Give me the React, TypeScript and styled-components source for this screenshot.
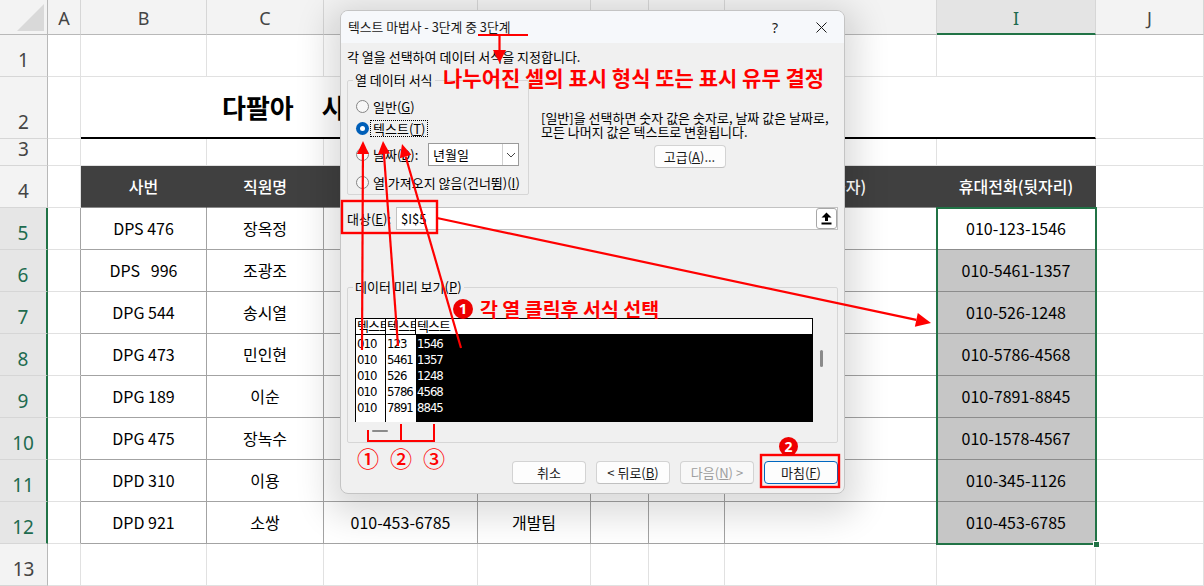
import React from "react";
import styled, { createGlobalStyle, css } from "styled-components";

const GlobalStyle = createGlobalStyle`
  html, body { margin: 0; padding: 0; background: #fff; }
  body { font-family: "Noto Sans CJK KR", "Noto Sans", sans-serif; overflow: hidden; }
  * { box-sizing: border-box; }
`;

const COLS = [48, 33, 126, 117, 154, 113, 58, 76, 212, 159, 108];
const ROWS = [35, 42, 62, 27, 42, 42, 42, 42, 42, 42, 42, 42, 42, 42];
const GREEN = "#217346";
const RED = "#ff0000";

const Page = styled.div`
  position: relative;
  width: 1204px;
  height: 586px;
  overflow: hidden;
  background: #fff;
`;

const Sheet = styled.div`
  display: grid;
  grid-template-columns: ${COLS.map((c) => c + "px").join(" ")};
  grid-template-rows: ${ROWS.map((r) => r + "px").join(" ")};
`;

const placed = css<{ $r: number; $c: number; $span?: number; $rs?: number }>`
  grid-row: ${(p) => p.$r} / span ${(p) => p.$rs ?? 1};
  grid-column: ${(p) => p.$c} / span ${(p) => p.$span ?? 1};
`;

const Corner = styled.div`
  grid-row: 1;
  grid-column: 1;
  position: relative;
  background: #f3f3f3;
  border-right: 1px solid #b8b8b8;
  border-bottom: 1px solid #b8b8b8;
  &::after {
    content: "";
    position: absolute;
    right: 3px;
    bottom: 3px;
    width: 27px;
    height: 27px;
    background: #d9d9d9;
    clip-path: polygon(100% 0, 100% 100%, 0 100%);
  }
`;

const ColHead = styled.div<{ $r: number; $c: number; $sel?: boolean }>`
  ${placed};
  display: flex;
  align-items: center;
  justify-content: center;
  font-family: "Noto Sans", sans-serif;
  font-size: 18px;
  line-height: 1;
  padding-top: 2px;
  color: ${(p) => (p.$sel ? "#1e6b4f" : "#444")};
  background: ${(p) => (p.$sel ? "#e4e4e4" : "#f3f3f3")};
  border-right: 1px solid #d6d6d6;
  border-bottom: ${(p) => (p.$sel ? `2px solid ${GREEN}` : "1px solid #b8b8b8")};
`;

const RowHead = styled.div<{ $r: number; $c: number; $sel?: boolean }>`
  ${placed};
  display: flex;
  align-items: flex-end;
  justify-content: center;
  padding-bottom: 4px;
  font-family: "Noto Sans", sans-serif;
  font-size: 19px;
  line-height: 24px;
  color: ${(p) => (p.$sel ? "#1e6b4f" : "#444")};
  background: ${(p) => (p.$sel ? "#e6e6e6" : "#f3f3f3")};
  border-right: ${(p) => (p.$sel ? `2px solid ${GREEN}` : "1px solid #b8b8b8")};
  border-bottom: 1px solid #d6d6d6;
`;

type Kind = "plain" | "table" | "head" | "sel" | "active" | "title";

const kindStyles: Record<Kind, ReturnType<typeof css>> = {
  plain: css`
    background: #fff;
    border-right: 1px solid #e1e1e1;
    border-bottom: 1px solid #e1e1e1;
  `,
  table: css`
    background: #fff;
    border-right: 1px solid #a3a3a3;
    border-bottom: 1px solid #a3a3a3;
  `,
  head: css`
    background: #404040;
    color: #fff;
    font-weight: 500;
    border-right: 1px solid #404040;
    border-bottom: 1px solid #8a8a8a;
  `,
  sel: css`
    background: #c6c6c6;
    border-right: 1px solid #8c8c8c;
    border-bottom: 1px solid #8c8c8c;
  `,
  active: css`
    background: #fff;
    border-right: 1px solid #8c8c8c;
    border-bottom: 1px solid #8c8c8c;
  `,
  title: css`
    background: #fff;
    border-right: 1px solid #e1e1e1;
    border-bottom: 2px solid #000;
    justify-content: flex-start;
    padding-left: 141px;
    font-size: 26px;
    font-weight: 700;
    word-spacing: 22px;
  `,
};

const Cell = styled.div<{ $r: number; $c: number; $span?: number; $kind: Kind; $darkRight?: boolean }>`
  ${placed};
  display: flex;
  align-items: center;
  justify-content: center;
  font-size: 16px;
  line-height: 1.2;
  color: #000;
  white-space: pre;
  overflow: hidden;
  ${(p) => kindStyles[p.$kind]};
  ${(p) => p.$darkRight && "border-right-color: #a3a3a3;"}
`;

const SelBox = styled.div<{ $r: number; $c: number; $rs?: number }>`
  ${placed};
  position: relative;
  z-index: 2;
  margin: -1px -1px -1px -1px;
  border: 2px solid ${GREEN};
  pointer-events: none;
`;

const FillHandle = styled.div`
  position: absolute;
  right: -5px;
  bottom: -5px;
  width: 7px;
  height: 7px;
  background: ${GREEN};
  border: 1px solid #fff;
`;

/* ---------------- Dialog ---------------- */

const Dialog = styled.div`
  position: absolute;
  left: 340px;
  top: 10px;
  width: 505px;
  height: 484px;
  z-index: 4;
  display: flex;
  flex-direction: column;
  background: #f0f0f0;
  border: 1px solid #c4c4c4;
  border-radius: 8px;
  overflow: hidden;
  box-shadow: 0 10px 34px 12px rgba(0, 0, 0, 0.14);
  font-family: "Noto Sans CJK KR", sans-serif;
  font-size: 13px;
  color: #000;
`;

const TitleBar = styled.div`
  flex: none;
  height: 32px;
  display: flex;
  align-items: center;
  padding-left: 7px;
  background: #f6f8fb;
`;

const TitleText = styled.span`
  font-size: 12.8px;
  line-height: 16px;
  color: #1a1a1a;
`;

const TitleButtons = styled.div`
  margin-left: auto;
  display: flex;
  height: 100%;
`;

const TitleBtn = styled.div`
  width: 46px;
  height: 100%;
  display: flex;
  align-items: center;
  justify-content: center;
  font-family: "Noto Sans", sans-serif;
  font-size: 14px;
  color: #1a1a1a;
`;

const Body = styled.div`
  flex: 1;
  display: flex;
  flex-direction: column;
  padding: 0 6px;
`;

const Instruction = styled.div`
  margin-top: 6px;
  line-height: 16px;
`;

const GroupRow = styled.div`
  display: flex;
  align-items: flex-start;
  margin-top: 8px;
`;

const Group = styled.fieldset<{ $w?: number; $h: number; $mt?: number }>`
  margin: ${(p) => p.$mt ?? 0}px 0 0 0;
  padding: 0 0 0 3px;
  width: ${(p) => (p.$w ? p.$w + "px" : "auto")};
  height: ${(p) => p.$h}px;
  border: 1px solid #d6d6d6;
  border-radius: 2px;
  display: flex;
  flex-direction: column;
  min-inline-size: 0;
`;

const Legend = styled.legend`
  padding: 0 2px;
  margin-left: 2px;
  font-size: 13px;
  line-height: 14px;
`;

const RadioRow = styled.div<{ $h: number; $mt: number }>`
  display: flex;
  align-items: center;
  height: ${(p) => p.$h}px;
  margin-top: ${(p) => p.$mt}px;
  padding-left: 5px;
  padding-right: 9px;
`;

const Radio = styled.span<{ $on?: boolean }>`
  position: relative;
  flex: none;
  width: 13px;
  height: 13px;
  border-radius: 50%;
  margin-right: 1px;
  ${(p) =>
    p.$on
      ? css`
          background: #005fb8;
          &::after {
            content: "";
            position: absolute;
            left: 4px;
            top: 4px;
            width: 5px;
            height: 5px;
            border-radius: 50%;
            background: #fff;
          }
        `
      : css`
          background: #f7f7f7;
          border: 1px solid #858585;
        `}
`;

const RadioLabel = styled.span<{ $focus?: boolean }>`
  padding: 0 2px;
  line-height: 15px;
  border: 1px ${(p) => (p.$focus ? "dotted #000" : "solid transparent")};
  white-space: nowrap;
`;

const Combo = styled.div`
  margin-left: auto;
  flex: none;
  width: 91px;
  height: 23px;
  display: flex;
  align-items: stretch;
  background: #fff;
  border: 1px solid #9a9a9a;
`;

const ComboText = styled.span`
  flex: 1;
  display: flex;
  align-items: center;
  padding-left: 4px;
`;

const ComboArrow = styled.span`
  width: 16px;
  display: flex;
  align-items: center;
  justify-content: center;
  border-left: 1px solid #d0d0d0;
`;

const SideCol = styled.div`
  flex: 1;
  margin-left: 12px;
  padding-top: 38px;
  display: flex;
  flex-direction: column;
  align-items: center;
`;

const Desc = styled.div`
  align-self: flex-start;
  line-height: 14px;
  white-space: nowrap;
`;

const Btn = styled.div<{ $w?: number; $default?: boolean; $disabled?: boolean; $mt?: number }>`
  flex: none;
  width: ${(p) => p.$w ?? 74}px;
  height: 23px;
  margin-top: ${(p) => p.$mt ?? 0}px;
  display: flex;
  align-items: center;
  justify-content: center;
  background: ${(p) => (p.$disabled ? "#f8f8f8" : "#fdfdfd")};
  border: 1px solid ${(p) => (p.$default ? "#0067c0" : "#d3d3d3")};
  border-bottom-color: ${(p) => (p.$default ? "#0067c0" : "#c0c0c0")};
  border-radius: 4px;
  color: ${(p) => (p.$disabled ? "#9d9d9d" : "#1a1a1a")};
  white-space: nowrap;
`;

const TargetRow = styled.div`
  display: flex;
  align-items: center;
  height: 23px;
  margin-top: 12px;
`;

const TargetInput = styled.div`
  margin-left: auto;
  width: 442px;
  height: 23px;
  display: flex;
  align-items: center;
  padding: 0 0 0 4px;
  background: #fff;
  border: 1px solid #c2c2c2;
`;

const CollapseBtn = styled.span`
  margin-left: auto;
  width: 21px;
  height: 21px;
  display: flex;
  align-items: center;
  justify-content: center;
  border: 1px solid #a8a8a8;
  border-radius: 3px;
  background: #fff;
`;

const PreviewWrap = styled.div`
  display: flex;
  margin: 24px 0 0 4px;
`;

const PreviewTable = styled.div`
  width: 458px;
  height: 104px;
  display: grid;
  grid-template-columns: 30px 30px 1fr;
  grid-template-rows: 16px 1fr;
  border: 1px solid #000;
  border-bottom: none;
  background: #fff;
  font-family: "DejaVu Sans Condensed", "Noto Sans CJK KR", sans-serif;
  font-size: 13px;
  letter-spacing: -1px;
`;

const PHead = styled.div<{ $last?: boolean }>`
  overflow: hidden;
  white-space: nowrap;
  line-height: 15px;
  padding-left: 1px;
  border-bottom: 1px solid #000;
  border-right: ${(p) => (p.$last ? "none" : "1px solid #000")};
  background: #fff;
`;

const PCol = styled.div<{ $dark?: boolean; $line?: boolean }>`
  display: flex;
  flex-direction: column;
  padding: 1px 0 0 1px;
  background: ${(p) => (p.$dark ? "#000" : "#fff")};
  color: ${(p) => (p.$dark ? "#fff" : "#000")};
  border-right: ${(p) => (p.$line ? "1px solid #000" : "none")};
  overflow: hidden;
`;

const PLine = styled.span`
  line-height: 16px;
  height: 16px;
  white-space: nowrap;
`;

const VScroll = styled.div`
  margin-left: 7px;
  padding-top: 32px;
`;

const Thumb = styled.div<{ $w: number; $h: number }>`
  width: ${(p) => p.$w}px;
  height: ${(p) => p.$h}px;
  background: #8a8a8a;
  border-radius: 2px;
`;

const HScroll = styled.div`
  margin: 8px 0 0 21px;
`;

const ButtonRow = styled.div`
  display: flex;
  justify-content: flex-end;
  gap: 10px;
  margin-top: 18px;
`;

/* ---------------- Annotations ---------------- */

const Overlay = styled.svg`
  position: absolute;
  left: 0;
  top: 0;
  width: 1204px;
  height: 586px;
  pointer-events: none;
  z-index: 6;
`;

const Note = styled.div<{ $x: number; $y: number }>`
  position: absolute;
  left: ${(p) => p.$x}px;
  top: ${(p) => p.$y}px;
  z-index: 7;
  display: flex;
  align-items: center;
  gap: 7px;
  color: ${RED};
  font-family: "Noto Sans CJK KR", sans-serif;
  font-weight: 700;
  white-space: nowrap;
`;

const NoteText = styled.span<{ $size: number }>`
  font-size: ${(p) => p.$size}px;
  line-height: 1.2;
`;

const Badge = styled.span<{ $d: number }>`
  flex: none;
  width: ${(p) => p.$d}px;
  height: ${(p) => p.$d}px;
  border-radius: 50%;
  background: #ee0000;
  color: #fff;
  display: flex;
  align-items: center;
  justify-content: center;
  font-family: "Noto Sans", sans-serif;
  font-size: ${(p) => Math.round(p.$d * 0.75)}px;
  font-weight: 700;
  line-height: 1;
`;

const Circled = styled.div`
  position: absolute;
  left: 357px;
  top: 443px;
  z-index: 7;
  display: flex;
  gap: 11px;
  color: ${RED};
  font-family: "Noto Sans CJK KR", sans-serif;
  font-size: 22px;
  font-weight: 500;
  line-height: 28px;
`;

/* ---------------- Data ---------------- */

const ids = ["DPS 476", "DPS   996", "DPG 544", "DPG 473", "DPG 189", "DPG 475", "DPD 310", "DPD 921"];
const names = ["장옥정", "조광조", "송시열", "민인현", "이순", "장녹수", "이용", "소쌍"];
const phones = [
  "010-123-1546",
  "010-5461-1357",
  "010-526-1248",
  "010-5786-4568",
  "010-7891-8845",
  "010-1578-4567",
  "010-345-1126",
  "010-453-6785",
];
const depts = ["영업팀", "총무팀", "기획팀", "영업팀", "인사팀", "총무팀", "기획팀", "개발팀"];
const letters = ["A", "B", "C", "D", "E", "F", "G", "H", "I", "J"];

function buildSheet() {
  const out: React.ReactNode[] = [<Corner key="corner" />];
  letters.forEach((L, i) =>
    out.push(
      <ColHead key={"c" + L} $r={1} $c={i + 2} $sel={L === "I"}>
        {L}
      </ColHead>
    )
  );
  for (let r = 1; r <= 13; r++) {
    const gr = r + 1;
    const inTable = r >= 5 && r <= 12;
    out.push(
      <RowHead key={"r" + r} $r={gr} $c={1} $sel={inTable}>
        {r}
      </RowHead>
    );
    const k = (c: number) => `${r}-${c}`;
    if (r === 2) {
      out.push(<Cell key={k(2)} $r={gr} $c={2} $kind="plain" />);
      out.push(
        <Cell key={k(3)} $r={gr} $c={3} $span={8} $kind="title">
          다팔아 사원 연락처 명부
        </Cell>
      );
      out.push(<Cell key={k(11)} $r={gr} $c={11} $kind="plain" />);
    } else if (r === 4) {
      out.push(<Cell key={k(2)} $r={gr} $c={2} $kind="plain" />);
      const heads: [number, number, string][] = [
        [3, 1, "사번"],
        [4, 1, "직원명"],
        [5, 1, "휴대전화"],
        [6, 1, "부서"],
        [7, 1, ""],
        [8, 2, "휴대전화(가운데 숫자)"],
        [10, 1, "휴대전화(뒷자리)"],
      ];
      heads.forEach(([c, s, t]) =>
        out.push(
          <Cell key={k(c)} $r={gr} $c={c} $span={s} $kind="head">
            {t}
          </Cell>
        )
      );
      out.push(<Cell key={k(11)} $r={gr} $c={11} $kind="plain" />);
    } else if (inTable) {
      const i = r - 5;
      out.push(<Cell key={k(2)} $r={gr} $c={2} $kind="plain" $darkRight />);
      const vals = [ids[i], names[i], phones[i], depts[i], "", "", ""];
      vals.forEach((v, j) =>
        out.push(
          <Cell key={k(3 + j)} $r={gr} $c={3 + j} $kind="table">
            {v}
          </Cell>
        )
      );
      out.push(
        <Cell key={k(10)} $r={gr} $c={10} $kind={r === 5 ? "active" : "sel"}>
          {phones[i]}
        </Cell>
      );
      out.push(<Cell key={k(11)} $r={gr} $c={11} $kind="plain" />);
    } else {
      for (let c = 2; c <= 11; c++) out.push(<Cell key={k(c)} $r={gr} $c={c} $kind="plain" />);
    }
  }
  out.push(
    <SelBox key="sel" $r={6} $c={10} $rs={8}>
      <FillHandle />
    </SelBox>
  );
  return out;
}

function Chevron() {
  return (
    <svg width="10" height="6" viewBox="0 0 10 6">
      <path d="M1 1 L5 5 L9 1" fill="none" stroke="#444" strokeWidth="1" />
    </svg>
  );
}

function CloseIcon() {
  return (
    <svg width="11" height="11" viewBox="0 0 11 11">
      <path d="M0.5 0.5 L10.5 10.5 M10.5 0.5 L0.5 10.5" stroke="#1a1a1a" strokeWidth="1" />
    </svg>
  );
}

function CollapseIcon() {
  return (
    <svg width="11" height="13" viewBox="0 0 11 13">
      <path d="M5.5 0.5 L10.5 5.5 L7 5.5 L7 9 L4 9 L4 5.5 L0.5 5.5 Z" fill="#000" />
      <rect x="0.5" y="10.5" width="10" height="2" fill="#000" />
    </svg>
  );
}

function arrowHead(x1: number, y1: number, tx: number, ty: number, len: number, half: number) {
  const dx = tx - x1;
  const dy = ty - y1;
  const L = Math.hypot(dx, dy);
  const ux = dx / L;
  const uy = dy / L;
  const bx = tx - ux * len;
  const by = ty - uy * len;
  const px = -uy * half;
  const py = ux * half;
  return {
    base: [bx, by] as [number, number],
    points: `${tx},${ty} ${bx + px},${by + py} ${bx - px},${by - py}`,
  };
}

function Arrow({ x1, y1, x2, y2, len = 13, half = 6 }: { x1: number; y1: number; x2: number; y2: number; len?: number; half?: number }) {
  const h = arrowHead(x1, y1, x2, y2, len, half);
  return (
    <g>
      <line x1={x1} y1={y1} x2={h.base[0]} y2={h.base[1]} stroke={RED} strokeWidth="2.2" />
      <polygon points={h.points} fill={RED} />
    </g>
  );
}

export default function App() {
  return (
    <>
      <GlobalStyle />
      <Page>
        <Sheet>{buildSheet()}</Sheet>

        <Dialog>
          <TitleBar>
            <TitleText>텍스트 마법사 - 3단계 중 3단계</TitleText>
            <TitleButtons>
              <TitleBtn>?</TitleBtn>
              <TitleBtn>
                <CloseIcon />
              </TitleBtn>
            </TitleButtons>
          </TitleBar>
          <Body>
            <Instruction>각 열을 선택하여 데이터 서식을 지정합니다.</Instruction>
            <GroupRow>
              <Group $w={182} $h={122}>
                <Legend>열 데이터 서식</Legend>
                <RadioRow $h={22} $mt={8}>
                  <Radio />
                  <RadioLabel>
                    일반(<u>G</u>)
                  </RadioLabel>
                </RadioRow>
                <RadioRow $h={22} $mt={0}>
                  <Radio $on />
                  <RadioLabel $focus>
                    텍스트(<u>T</u>)
                  </RadioLabel>
                </RadioRow>
                <RadioRow $h={23} $mt={4}>
                  <Radio />
                  <RadioLabel>
                    날짜(<u>D</u>):
                  </RadioLabel>
                  <Combo>
                    <ComboText>년월일</ComboText>
                    <ComboArrow>
                      <Chevron />
                    </ComboArrow>
                  </Combo>
                </RadioRow>
                <RadioRow $h={22} $mt={5}>
                  <Radio />
                  <RadioLabel>
                    열 가져오지 않음(건너뜀)(<u>I</u>)
                  </RadioLabel>
                </RadioRow>
              </Group>
              <SideCol>
                <Desc>
                  [일반]을 선택하면 숫자 값은 숫자로, 날짜 값은 날짜로,
                  <br />
                  모든 나머지 값은 텍스트로 변환됩니다.
                </Desc>
                <Btn $w={72} $mt={6}>
                  고급(<u>A</u>)...
                </Btn>
              </SideCol>
            </GroupRow>

            <TargetRow>
              <span>
                대상(<u>E</u>):
              </span>
              <TargetInput>
                <span>$I$5</span>
                <CollapseBtn>
                  <CollapseIcon />
                </CollapseBtn>
              </TargetInput>
            </TargetRow>

            <Group $h={163} $mt={50}>
              <Legend>
                데이터 미리 보기(<u>P</u>)
              </Legend>
              <PreviewWrap>
                <PreviewTable>
                  <PHead>텍스트</PHead>
                  <PHead>텍스트</PHead>
                  <PHead $last>텍스트</PHead>
                  <PCol $line>
                    {["010", "010", "010", "010", "010"].map((v, i) => (
                      <PLine key={i}>{v}</PLine>
                    ))}
                  </PCol>
                  <PCol>
                    {["123", "5461", "526", "5786", "7891"].map((v, i) => (
                      <PLine key={i}>{v}</PLine>
                    ))}
                  </PCol>
                  <PCol $dark>
                    {["1546", "1357", "1248", "4568", "8845"].map((v, i) => (
                      <PLine key={i}>{v}</PLine>
                    ))}
                  </PCol>
                </PreviewTable>
                <VScroll>
                  <Thumb $w={3} $h={17} />
                </VScroll>
              </PreviewWrap>
              <HScroll>
                <Thumb $w={16} $h={2} />
              </HScroll>
            </Group>

            <ButtonRow>
              <Btn>취소</Btn>
              <Btn>
                &lt; 뒤로(<u>B</u>)
              </Btn>
              <Btn $disabled>
                다음(<u>N</u>) &gt;
              </Btn>
              <Btn $default>
                마침(<u>F</u>)
              </Btn>
            </ButtonRow>
          </Body>
        </Dialog>

        <Overlay viewBox="0 0 1204 586">
          <line x1="478" y1="35" x2="528" y2="35" stroke={RED} strokeWidth="2.2" />
          <Arrow x1={499.5} y1={35} x2={499.5} y2={63} len={13} half={6.5} />
          <Arrow x1={362} y1={350} x2={363} y2={141} />
          <Arrow x1={398} y1={346} x2={383} y2={141} />
          <Arrow x1={461} y1={348} x2={402} y2={144} />
          <Arrow x1={437} y1={218} x2={931} y2={323} len={15} half={7} />
          <rect x="342" y="201" width="95" height="32" fill="none" stroke={RED} strokeWidth="2.4" />
          <rect x="761" y="455" width="78" height="32" fill="none" stroke={RED} strokeWidth="2.4" />
          <path d="M368 430 L368 441 L434 441 L434 424 M401 424 L401 441" fill="none" stroke={RED} strokeWidth="2" />
        </Overlay>

        <Note $x={443} $y={65}>
          <NoteText $size={21}>나누어진 셀의 표시 형식 또는 표시 유무 결정</NoteText>
        </Note>
        <Note $x={453} $y={297}>
          <Badge $d={20}>1</Badge>
          <NoteText $size={19.5}>각 열 클릭후 서식 선택</NoteText>
        </Note>
        <Note $x={779} $y={437}>
          <Badge $d={19}>2</Badge>
        </Note>
        <Circled>
          <span>①</span>
          <span>②</span>
          <span>③</span>
        </Circled>
      </Page>
    </>
  );
}
